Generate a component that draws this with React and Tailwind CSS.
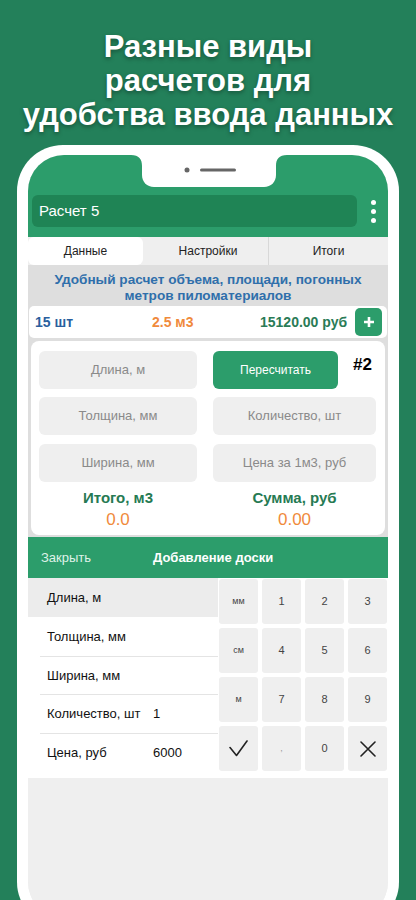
// Экран "Добавление доски": зелёный фон, рамка телефона, форма расчёта и клавиатура
const keys = [
  ['мм', '1', '2', '3'],
  ['см', '4', '5', '6'],
  ['м', '7', '8', '9'],
  ['ok', ',', '0', 'x'],
]

const rows = [
  { label: 'Длина, м', value: '' },
  { label: 'Толщина, мм', value: '' },
  { label: 'Ширина, мм', value: '' },
  { label: 'Количество, шт', value: '1' },
  { label: 'Цена, руб', value: '6000' },
]

function Key({ k }) {
  let content
  if (k === 'ok') {
    content = (
      <svg width="19" height="17" viewBox="0 0 19 17" fill="none">
        <path d="M1 7.5 L7.5 15.5 L18 1" stroke="#222" strokeWidth="1.6" strokeLinecap="round" strokeLinejoin="round" />
      </svg>
    )
  } else if (k === 'x') {
    content = (
      <svg width="16" height="16" viewBox="0 0 16 16" fill="none">
        <path d="M1 1 L15 15 M15 1 L1 15" stroke="#222" strokeWidth="1.6" strokeLinecap="round" />
      </svg>
    )
  } else if (k === ',') {
    content = <span className="text-[9px] text-[#999]">,</span>
  } else {
    const small = k.length > 1 || k === 'м'
    content = <span className={small ? 'text-[9px] text-[#444]' : 'text-[11px] text-[#444]'}>{k}</span>
  }
  return <div className="flex h-[45px] items-center justify-center rounded-[3px] bg-[#efefef]">{content}</div>
}

function Field({ children, className = '' }) {
  return (
    <div className={`flex h-[38px] items-center justify-center rounded-[6px] bg-[#efefef] text-[13px] text-[#8a8a8a] ${className}`}>
      {children}
    </div>
  )
}

export default function App() {
  return (
    <div className="h-[900px] w-[416px] overflow-hidden bg-[#23805a] font-['Liberation_Sans',Arial,sans-serif]">
      <h1 className="pt-[30px] text-center text-[31px] leading-[34px] font-bold text-white [text-shadow:0_2px_4px_rgba(0,0,0,0.35)]">
        Разные виды
        <br />
        расчетов для
        <br />
        удобства ввода данных
      </h1>

      {/* рамка телефона */}
      <div className="mx-[17px] mt-[13px] rounded-[46px] bg-white px-[11px] pt-[10px] pb-[10px]">
        <div className="relative flex h-[763px] flex-col overflow-hidden rounded-[36px] bg-[#efefef]">
          {/* вырез */}
          <svg className="absolute top-0 left-[103px]" width="156" height="32" viewBox="0 0 156 32">
            <path d="M0 0 H156 C148 0 145 4 145 11 V20 C145 27 140 32 133 32 H23 C16 32 11 27 11 20 V11 C11 4 8 0 0 0 Z" fill="#fff" />
            <circle cx="56" cy="15" r="2.5" fill="#666" />
            <rect x="69" y="13.5" width="36" height="3" rx="1.5" fill="#666" />
          </svg>

          {/* шапка */}
          <div className="bg-[#2c9d6b] pt-[40px] pb-[10px]">
            <div className="flex items-center">
              <div className="ml-[4px] flex h-[32px] w-[325px] items-center rounded-[6px] bg-[#1f8455] pl-[7px] text-[15px] text-white">
                Расчет 5
              </div>
              <div className="ml-[14px] flex flex-col gap-[4px]">
                <span className="h-[5px] w-[5px] rounded-full bg-white" />
                <span className="h-[5px] w-[5px] rounded-full bg-white" />
                <span className="h-[5px] w-[5px] rounded-full bg-white" />
              </div>
            </div>
          </div>

          {/* вкладки */}
          <div className="grid h-[28px] grid-cols-3 items-center bg-[#efefef] text-[12px] text-[#222]">
            <div className="flex h-full w-[115px] items-center justify-center rounded-[6px] bg-white">Данные</div>
            <div className="flex h-full items-center justify-center">Настройки</div>
            <div className="flex h-full items-center justify-center border-l border-[#d8d8d8]">Итоги</div>
          </div>

          {/* содержимое */}
          <div className="bg-[#dedede] pt-[4px] pb-[1px]">
            <p className="px-1 pt-[3px] pb-[1px] text-center text-[13.6px] leading-[16px] font-bold text-[#2f6fab]">
              Удобный расчет объема, площади, погонных
              <br />
              метров пиломатериалов
            </p>

            <div className="mx-[1px] mt-[1px] flex h-[32px] items-center rounded-[5px] bg-white pl-[6px] text-[14px] font-bold">
              <span className="w-[117px] text-[#2a5f9e]">15 шт</span>
              <span className="w-[108px] text-[#f08a3c]">2.5 м3</span>
              <span className="text-[#2a7b56]">15120.00 руб</span>
              <button className="ml-auto mr-[5px] flex h-[28px] w-[27px] items-center justify-center rounded-[5px] bg-[#2c9d6b]">
                <svg width="12" height="12" viewBox="0 0 12 12">
                  <path d="M6 1 V11 M1 6 H11" stroke="#fff" strokeWidth="2.6" />
                </svg>
              </button>
            </div>

            <div className="mx-[3px] mt-[3px] mb-[1px] rounded-[8px] bg-white px-[8px] pt-[10px] pb-[5px]">
              <div className="grid grid-cols-[158px_163px] gap-x-[16px] gap-y-[8px]">
                <Field>Длина, м</Field>
                <div className="flex items-start">
                  <button className="flex h-[38px] w-[125px] items-center justify-center rounded-[6px] bg-[#2c9d6b] text-[12px] text-white">
                    Пересчитать
                  </button>
                  <span className="ml-[15px] pt-[1px] text-[17px] font-bold text-black">#2</span>
                </div>
                <Field>Толщина, мм</Field>
                <Field>Количество, шт</Field>
                <Field className="mt-[1px]">Ширина, мм</Field>
                <Field className="mt-[1px]">Цена за 1м3, руб</Field>
                <div className="-mt-[1px] text-center">
                  <div className="text-[15px] leading-[18px] font-bold text-[#267a53]">Итого, м3</div>
                  <div className="mt-[3px] text-[17px] leading-[20px] text-[#f08a3c]">0.0</div>
                </div>
                <div className="-mt-[1px] text-center">
                  <div className="text-[15px] leading-[18px] font-bold text-[#267a53]">Сумма, руб</div>
                  <div className="mt-[3px] text-[17px] leading-[20px] text-[#f08a3c]">0.00</div>
                </div>
              </div>
            </div>
          </div>

          {/* панель ввода */}
          <div className="flex h-[41px] items-center bg-[#2c9d6b] text-[13px]">
            <span className="ml-[13px] w-[112px] text-[#dff2e8]">Закрыть</span>
            <span className="font-bold text-white">Добавление доски</span>
          </div>
          <div className="flex bg-white pb-[7px]">
            <div className="w-[190px]">
              {rows.map((r, i) => (
                <div key={r.label} className={i === 0 ? 'h-[39px] bg-[#ececec]' : 'h-[38.5px] bg-white'}>
                  <div className={`ml-[12px] flex h-full items-center pl-[7px] text-[13px] text-[#111] ${i > 1 ? 'border-t border-[#e4e4e4]' : ''}`}>
                    <span className="w-[106px]">{r.label}</span>
                    <span>{r.value}</span>
                  </div>
                </div>
              ))}
            </div>
            <div className="ml-[1px] grid w-[168px] grid-cols-4 gap-[4px] pt-[1px]">
              {keys.flat().map((k, i) => (
                <Key key={i} k={k} />
              ))}
            </div>
          </div>
          <div className="flex-1 bg-[#efefef]" />
        </div>
      </div>
    </div>
  )
}
